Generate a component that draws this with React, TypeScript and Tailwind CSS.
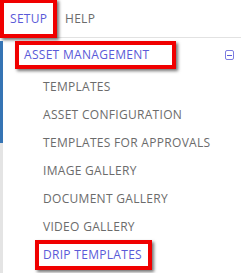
import React from "react";

const items = [
  "TEMPLATES",
  "ASSET CONFIGURATION",
  "TEMPLATES FOR APPROVALS",
  "IMAGE GALLERY",
  "DOCUMENT GALLERY",
  "VIDEO GALLERY",
];

export default function App() {
  return (
    <div className="relative w-[241px] h-[273px] overflow-hidden bg-white font-['Open_Sans',sans-serif] text-[12px] tracking-[0.3px]">
      {/* top nav */}
      <div className="flex h-[38px] items-center border-b border-[#e2e2e2]">
        <div className="flex h-[39px] w-[57px] items-center border-4 border-[#f00000] pl-[6px] shadow-[2px_2px_3px_rgba(0,0,0,0.55)] text-[#5a5ad8]">
          SETUP
        </div>
        <span className="ml-[8px] text-[#6b6b6b]">HELP</span>
      </div>

      <div className="flex">
        {/* edge of page behind the menu */}
        <div className="flex w-[3px] flex-col">
          <div className="mt-[3px] h-[102px] bg-[#3574b4]" />
          <div className="h-[140px] bg-[#e4e4e4]" />
        </div>

        <div className="flex-1">
          <div className="mt-[3px] flex items-center pr-[7px]">
            <div className="ml-[12px] flex h-[28px] w-[161px] items-center border-4 border-[#f00000] pl-[5px] shadow-[2px_2px_3px_rgba(0,0,0,0.55)] text-[#5a5ad8]">
              ASSET MANAGEMENT
            </div>
            <div className="ml-auto flex h-[10px] w-[9px] items-center justify-center rounded-[2px] border border-[#7d7de0]">
              <div className="h-px w-[5px] bg-[#5a5ad8]" />
            </div>
          </div>

          <div className="mt-[4px] pl-[40px]">
            {items.map((t) => (
              <div key={t} className="flex h-[28px] items-center text-[#6b6b6b]">
                {t}
              </div>
            ))}
            <div className="flex h-[28px] items-center">
              <div className="-ml-[8px] flex h-[30px] items-center border-4 border-[#f00000] pl-[4px] pr-[6px] shadow-[2px_2px_3px_rgba(0,0,0,0.55)] text-[#5a5ad8]">
                DRIP TEMPLATES
              </div>
            </div>
          </div>
        </div>
      </div>
    </div>
  );
}
